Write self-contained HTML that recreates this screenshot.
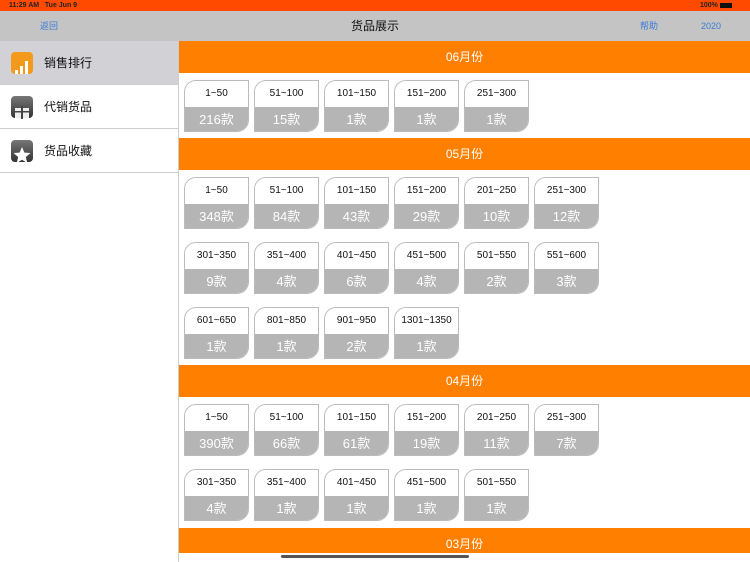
<!DOCTYPE html><html><head><meta charset="utf-8"><style>
*{margin:0;padding:0;box-sizing:border-box}
body{width:750px;height:562px;overflow:hidden;background:#fff;font-family:"Liberation Sans","Noto Sans CJK SC",sans-serif;position:relative}
.abs{position:absolute}
.status{left:0;top:0;width:750px;height:11px;background:#ff4a00;color:#222;font-size:7px;font-weight:bold;line-height:11px}
.nav{left:0;top:11px;width:750px;height:30px;background:#c4c4c4;font-size:9px;color:#3a7bd5;line-height:30px}
.side{left:0;top:41px;width:179px;height:521px;background:#fff;border-right:1px solid #ccc}
.row{position:absolute;left:0;width:178px;height:44px;border-bottom:1px solid #ccc;font-size:12px;color:#111;line-height:44px;padding-left:44px}
.ic{position:absolute;left:11px;top:11px;width:22px;height:22px;border-radius:4px}
.hd{position:absolute;left:179px;width:571px;height:32px;background:#ff8000;color:#fff;font-size:12px;text-align:center;line-height:32px}
.c{position:absolute;width:65px;height:52px;border:1px solid #bbb;border-radius:12px 0 12px 0;overflow:hidden;text-align:center}
.c .t{height:26px;background:#fff;font-size:10px;color:#111;line-height:26px}
.c .b{height:25px;background:#b5b5b5;font-size:13px;color:#fff;line-height:25px}
</style></head><body>
<div class="abs status"><span style="position:absolute;left:9px">11:29 AM&nbsp;&nbsp; Tue Jun 9</span><span style="position:absolute;left:700px">100% <span style="display:inline-block;width:12px;height:5px;background:#111;vertical-align:middle"></span></span></div>
<div class="abs nav"><span style="position:absolute;left:40px">返回</span><span style="position:absolute;left:0;width:750px;text-align:center;color:#111;font-size:12px">货品展示</span><span style="position:absolute;left:640px">帮助</span><span style="position:absolute;left:701px">2020</span></div>
<div class="abs side">
<div class="row" style="top:0;background:#d1d1d6"><div class="ic" style="background:#f39a1c"><svg width="22" height="22"><rect x="4" y="14" width="3" height="4" fill="#fff"/><rect x="9" y="10" width="3" height="8" fill="#fff"/><rect x="14" y="5" width="3" height="13" fill="#fff"/></svg></div>销售排行</div>
<div class="row" style="top:44px"><div class="ic" style="background:linear-gradient(#777,#333)"><svg width="22" height="22"><rect x="4" y="8" width="14" height="10" fill="#eee"/><rect x="10" y="6" width="2" height="13" fill="#444"/><rect x="4" y="11" width="14" height="1.5" fill="#444"/></svg></div>代销货品</div>
<div class="row" style="top:88px"><div class="ic" style="background:linear-gradient(#777,#333)"><svg width="22" height="22"><polygon points="11,3 13.4,8.6 19.5,9 14.8,13 16.3,19 11,15.7 5.7,19 7.2,13 2.5,9 8.6,8.6" fill="#fff"/></svg></div>货品收藏</div>
</div>
<div class="hd" style="top:41px">06月份</div>
<div class="hd" style="top:138px">05月份</div>
<div class="hd" style="top:365px">04月份</div>
<div class="hd" style="top:528px;height:25px;line-height:32px">03月份</div>
<div id="cards"></div>
<div class="abs" style="left:281px;top:555px;width:188px;height:3px;border-radius:2px;background:#555"></div>
<script>
var rows=[[80,[["1~50","216款"],["51~100","15款"],["101~150","1款"],["151~200","1款"],["251~300","1款"]]],
[177,[["1~50","348款"],["51~100","84款"],["101~150","43款"],["151~200","29款"],["201~250","10款"],["251~300","12款"]]],
[242,[["301~350","9款"],["351~400","4款"],["401~450","6款"],["451~500","4款"],["501~550","2款"],["551~600","3款"]]],
[307,[["601~650","1款"],["801~850","1款"],["901~950","2款"],["1301~1350","1款"]]],
[404,[["1~50","390款"],["51~100","66款"],["101~150","61款"],["151~200","19款"],["201~250","11款"],["251~300","7款"]]],
[469,[["301~350","4款"],["351~400","1款"],["401~450","1款"],["451~500","1款"],["501~550","1款"]]]];
var h="";rows.forEach(function(r){r[1].forEach(function(c,i){h+='<div class="c" style="left:'+(184+70*i)+'px;top:'+r[0]+'px"><div class="t">'+c[0]+'</div><div class="b">'+c[1]+'</div></div>';});});
document.getElementById("cards").innerHTML=h;
</script>
</body></html>
